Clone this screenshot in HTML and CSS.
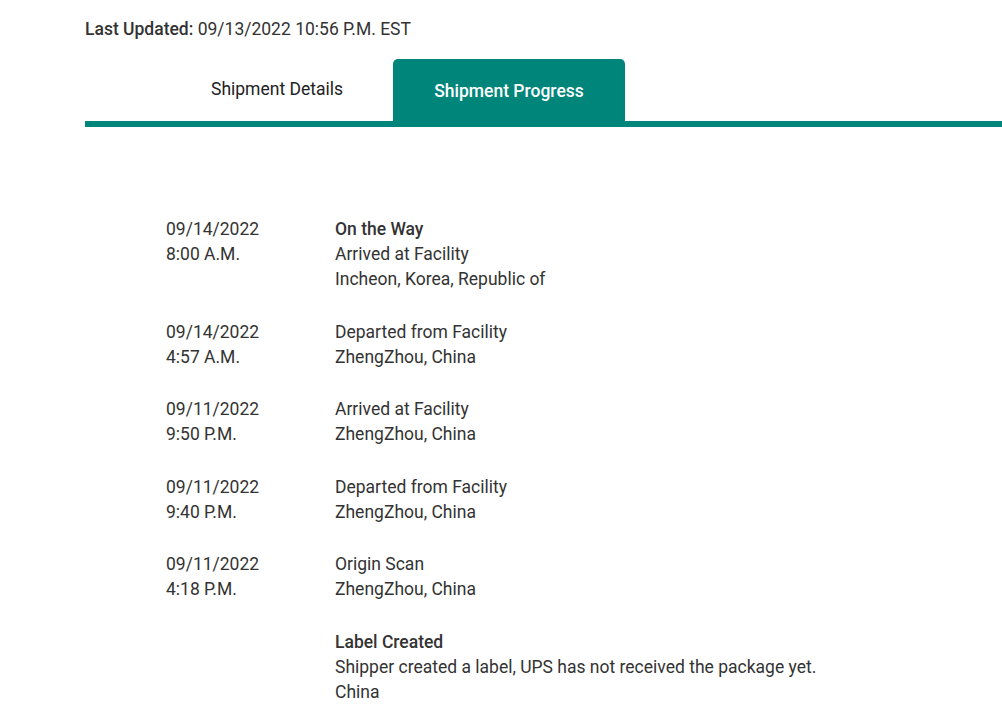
FILE: index.html
```html
<!DOCTYPE html>
<html lang="en">
<head>
    <meta charset="UTF-8">
    <meta name="viewport" content="width=device-width, initial-scale=1.0">
    <title>Shipment Progress</title>
    <link rel="stylesheet" href="styles.css">
</head>
<body>
    <div class="page">
        <p class="updated"><strong>Last Updated:</strong> 09/13/2022 10:56 P.M. EST</p>
        <div class="tabs">
            <div class="tab">Shipment Details</div>
            <div class="tab active">Shipment Progress</div>
        </div>

        <div class="progress">
            <div class="event">
                <div class="when">09/14/2022<br>8:00 A.M.</div>
                <div class="what"><b>On the Way</b><br>Arrived at Facility<br>Incheon, Korea, Republic of</div>
            </div>
            <div class="event">
                <div class="when">09/14/2022<br>4:57 A.M.</div>
                <div class="what">Departed from Facility<br>ZhengZhou, China</div>
            </div>
            <div class="event">
                <div class="when">09/11/2022<br>9:50 P.M.</div>
                <div class="what">Arrived at Facility<br>ZhengZhou, China</div>
            </div>
            <div class="event">
                <div class="when">09/11/2022<br>9:40 P.M.</div>
                <div class="what">Departed from Facility<br>ZhengZhou, China</div>
            </div>
            <div class="event">
                <div class="when">09/11/2022<br>4:18 P.M.</div>
                <div class="what">Origin Scan<br>ZhengZhou, China</div>
            </div>
            <div class="event">
                <div class="when"></div>
                <div class="what"><b>Label Created</b><br>Shipper created a label, UPS has not received the package yet.<br>China</div>
            </div>
        </div>
    </div>
</body>
</html>
```

FILE: styles.css
```css
body {
    margin: 0;
    font-family: Roboto, Arial, sans-serif;
    color: #333;
    background: #fff;
}
.page {
    padding: 17px 0 0 85px;
}
.updated {
    margin: 0;
    font-size: 17.5px;
    line-height: 24px;
}
.updated strong {
    font-weight: 500;
}
.tabs {
    display: flex;
    margin-top: 18px;
    padding-left: 76px;
    border-bottom: 6px solid #00857a;
}
.tab {
    width: 232px;
    height: 62px;
    display: flex;
    align-items: center;
    justify-content: center;
    font-size: 17.5px;
    color: #222;
    border-radius: 5px 5px 0 0;
}
.tab:first-child {
    padding-bottom: 2px;
    box-sizing: border-box;
}
.tab.active {
    background: #00857a;
    color: #fff;
    font-weight: 500;
    padding-top: 2px;
    box-sizing: border-box;
}
.progress {
    padding: 90px 0 0 81px;
}
.event {
    display: flex;
    font-size: 17.5px;
    line-height: 25px;
    margin-bottom: 27.5px;
}
.when {
    width: 169px;
}
.what b {
    font-weight: 500;
}
```
